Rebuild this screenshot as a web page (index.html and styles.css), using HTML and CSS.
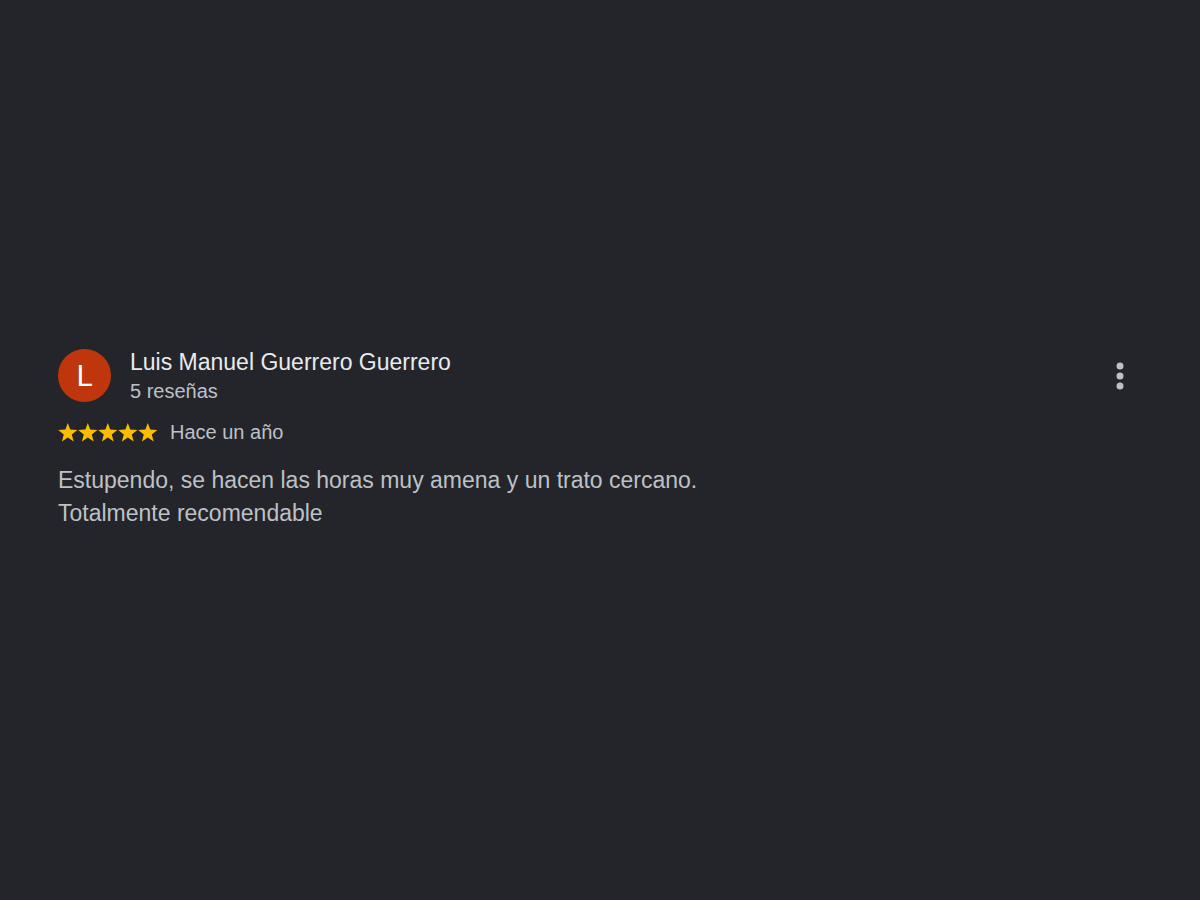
FILE: index.html
```html
<!DOCTYPE html>
<html lang="es">

<head>
    <meta charset="utf-8">
    <title>Reseña de Luis Manuel Guerrero Guerrero</title>
    <link rel="stylesheet" href="styles.css">
</head>

<body>
    <article class="review">
        <header class="review-header">
            <div class="avatar">L</div>
            <div class="author">
                <h1 class="author-name">Luis Manuel Guerrero Guerrero</h1>
                <div class="author-count">5 reseñas</div>
            </div>
            <button type="button" class="menu-button" aria-label="Más opciones">
                <svg width="8" height="28" viewBox="0 0 8 28" fill="currentColor">
                    <circle cx="4" cy="4" r="3.5" />
                    <circle cx="4" cy="14" r="3.5" />
                    <circle cx="4" cy="24" r="3.5" />
                </svg>
            </button>
        </header>
        <div class="rating">
            <svg class="stars" role="img" aria-label="5 de 5 estrellas" width="100" height="20" viewBox="0 0 100 20">
                <defs>
                    <path id="star" d="M9.800 1l2.400 6.600 7.200.4-5.600 4.500 1.900 7-5.900-4-5.900 4 1.900-7L.2 8l7.200-.4z" />
                </defs>
                <use href="#star" x="0" />
                <use href="#star" x="20" />
                <use href="#star" x="40" />
                <use href="#star" x="60" />
                <use href="#star" x="80" />
            </svg>
            <span class="date">Hace un año</span>
        </div>
        <p class="review-text">Estupendo, se hacen las horas muy amena y un trato cercano.<br>Totalmente recomendable</p>
    </article>
</body>

</html>
```
FILE: styles.css
```css
body {
    display: flex;
    flex-direction: column;
    justify-content: center;
    min-height: 100vh;
    margin: 0;
    box-sizing: border-box;
    padding: 0 58px 25px;
    font-family: "Liberation Sans", Arial, sans-serif;
    background-color: #24252a;
    color: #bdc1c6;
}

.review-header {
    display: flex;
    align-items: center;
}

.avatar {
    display: flex;
    justify-content: center;
    align-items: center;
    width: 53px;
    height: 53px;
    margin-right: 19px;
    border-radius: 50%;
    background-color: #bf360c;
    color: #fff;
    font-family: Roboto, sans-serif;
    font-size: 30px;
}

.author {
    flex: 1;
    padding-top: 3px;
}

.author-name {
    margin: 0;
    font-size: 23px;
    font-weight: normal;
    line-height: 29px;
    color: #e8eaed;
}

.author-count {
    font-size: 20px;
    line-height: 29px;
}

.menu-button {
    display: flex;
    padding: 0 18px;
    border: none;
    background: none;
    color: #bdc1c6;
    cursor: pointer;
}

.rating {
    display: flex;
    align-items: center;
    margin-top: 12px;
}

.stars {
    margin-right: 12px;
    fill: #fbbc04;
}

.date {
    font-size: 20px;
    line-height: 28px;
}

.review-text {
    margin: 18px 0 0;
    font-size: 23px;
    line-height: 33px;
}
```
